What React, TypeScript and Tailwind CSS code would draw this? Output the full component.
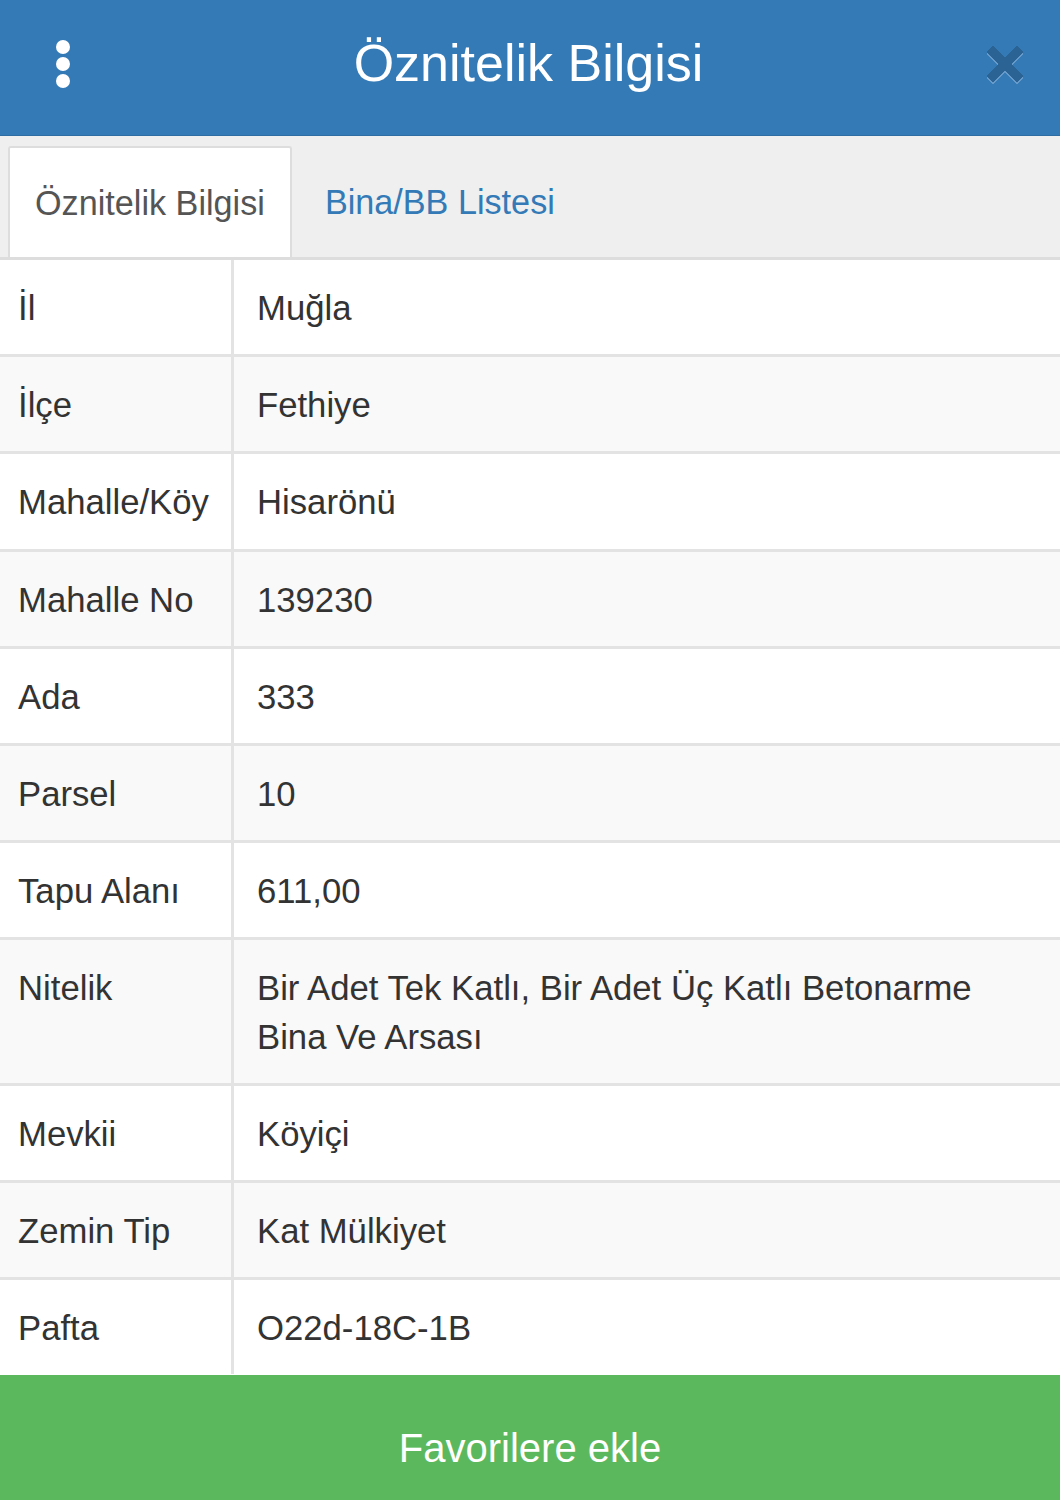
import { useState } from "react";

const rows: { label: string; value: string }[] = [
  { label: "İl", value: "Muğla" },
  { label: "İlçe", value: "Fethiye" },
  { label: "Mahalle/Köy", value: "Hisarönü" },
  { label: "Mahalle No", value: "139230" },
  { label: "Ada", value: "333" },
  { label: "Parsel", value: "10" },
  { label: "Tapu Alanı", value: "611,00" },
  { label: "Nitelik", value: "Bir Adet Tek Katlı, Bir Adet Üç Katlı Betonarme Bina Ve Arsası" },
  { label: "Mevkii", value: "Köyiçi" },
  { label: "Zemin Tip", value: "Kat Mülkiyet" },
  { label: "Pafta", value: "O22d-18C-1B" },
];

function CloseIcon() {
  return (
    <svg width="38" height="38" viewBox="0 0 38 38" className="mb-[7px] drop-shadow-[0_2px_0_rgba(255,255,255,0.25)]">
      <path
        d="M7 1 L19 13 L31 1 L37 7 L25 19 L37 31 L31 37 L19 25 L7 37 L1 31 L13 19 L1 7 Z"
        fill="#2b6394"
        stroke="#2b6394"
        strokeWidth="1"
        strokeLinejoin="round"
      />
    </svg>
  );
}

export default function App() {
  const [tab, setTab] = useState(0);

  return (
    <div className="w-[1060px] h-[1500px] flex flex-col bg-white font-['Liberation_Sans',Arial,sans-serif] overflow-hidden">
      {/* Header */}
      <div className="h-[136px] shrink-0 bg-[#337ab7] border-b border-[#2e6da4] flex items-center pl-[55px] pr-[36px]">
        <div className="flex flex-col gap-[3px] w-[16px] items-center mb-[7px]">
          <span className="w-[14px] h-[14px] rounded-full bg-white" />
          <span className="w-[14px] h-[14px] rounded-full bg-white" />
          <span className="w-[14px] h-[14px] rounded-full bg-white" />
        </div>
        <h1 className="flex-1 text-center text-white text-[52px] leading-none pb-[10px]">Öznitelik Bilgisi</h1>
        <CloseIcon />
      </div>

      {/* Tabs */}
      <div className="h-[124px] shrink-0 bg-[#efefef] border-b-[3px] border-[#ddd] flex items-end px-[8px] gap-[6px]">
        <button
          onClick={() => setTab(0)}
          className={
            tab === 0
              ? "h-[111px] px-[25px] pt-[2px] bg-white border-2 border-b-0 border-[#ddd] rounded-t-[3px] text-[34.2px] text-[#555]"
              : "h-[111px] px-[27px] pt-[2px] text-[34.2px] text-[#337ab7]"
          }
        >
          Öznitelik Bilgisi
        </button>
        <button
          onClick={() => setTab(1)}
          className={
            tab === 1
              ? "h-[111px] px-[25px] pt-[2px] bg-white border-2 border-b-0 border-[#ddd] rounded-t-[3px] text-[34.2px] text-[#555]"
              : "h-[111px] px-[27px] pt-[2px] text-[34.2px] text-[#337ab7]"
          }
        >
          Bina/BB Listesi
        </button>
      </div>

      {/* Attribute table */}
      <div className="flex-1 flex flex-col">
        {rows.map((row, i) => (
          <div
            key={row.label}
            className={`flex border-[#e3e3e3] text-[34.7px] leading-[48.2px] text-[#333] ${
              i > 0 ? "border-t-[3px]" : ""
            } ${i % 2 === 1 ? "bg-[#f9f9f9]" : "bg-white"}`}
          >
            <div className="w-[231px] shrink-0 pl-[18px] pt-[24px] pb-[22px]">{row.label}</div>
            <div className="flex-1 border-l-[3px] border-[#e3e3e3] pl-[23px] pr-[40px] pt-[24px] pb-[22px]">
              {row.value}
            </div>
          </div>
        ))}
      </div>

      {/* Footer action */}
      <button className="h-[125px] shrink-0 bg-[#5cb85c] text-white text-[40px] leading-[46px] flex items-start justify-center pt-[50px]">
        Favorilere ekle
      </button>
    </div>
  );
}
